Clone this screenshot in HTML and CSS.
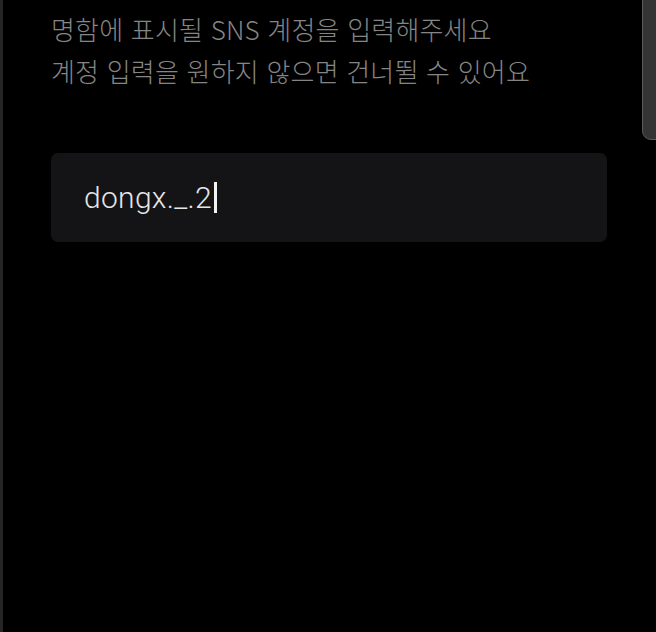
FILE: index.html
```html
<!DOCTYPE html>
<html lang="ko">
<head>
<meta charset="utf-8">
<link rel="stylesheet" href="styles.css">
</head>
<body>
<div class="screen">
  <div class="edge"></div>
  <main class="content">
    <p class="guide">명함에 표시될 SNS 계정을 입력해주세요<br>계정 입력을 원하지 않으면 건너뛸 수 있어요</p>
    <div class="field"><span class="value">dongx._.2</span><span class="caret"></span></div>
  </main>
  <div class="scrollbar"></div>
</div>
</body>
</html>
```
FILE: styles.css
```css
html, body {
  margin: 0;
  padding: 0;
  background: #000;
}
.screen {
  position: relative;
  width: 656px;
  height: 632px;
  overflow: hidden;
  display: flex;
  font-family: "Noto Sans CJK KR", "Noto Sans", sans-serif;
}
.edge {
  width: 3px;
  flex: none;
  background: #252525;
}
.content {
  flex: 1;
  padding: 8px 0 0 48px;
}
.guide {
  margin: 0;
  font-size: 26px;
  line-height: 42px;
  color: #858585;
  font-weight: 300;
  letter-spacing: 0.2px;
}
.field {
  margin-top: 61px;
  width: 556px;
  height: 89px;
  box-sizing: border-box;
  background: #141416;
  border-radius: 7px;
  display: flex;
  align-items: center;
  padding-left: 33px;
}
.value {
  font-size: 30px;
  color: #e6e6e6;
  font-family: Roboto, "Noto Sans", sans-serif;
  font-weight: 300;
  letter-spacing: 0.3px;
}
.caret {
  width: 3px;
  height: 31px;
  background: #f2f2f2;
  margin-left: 2px;
}
.scrollbar {
  position: absolute;
  top: -2px;
  right: -2px;
  width: 14px;
  height: 140px;
  background: #343434;
  border: 1px solid #5a5a5a;
  border-radius: 0 0 0 9px;
}
```
